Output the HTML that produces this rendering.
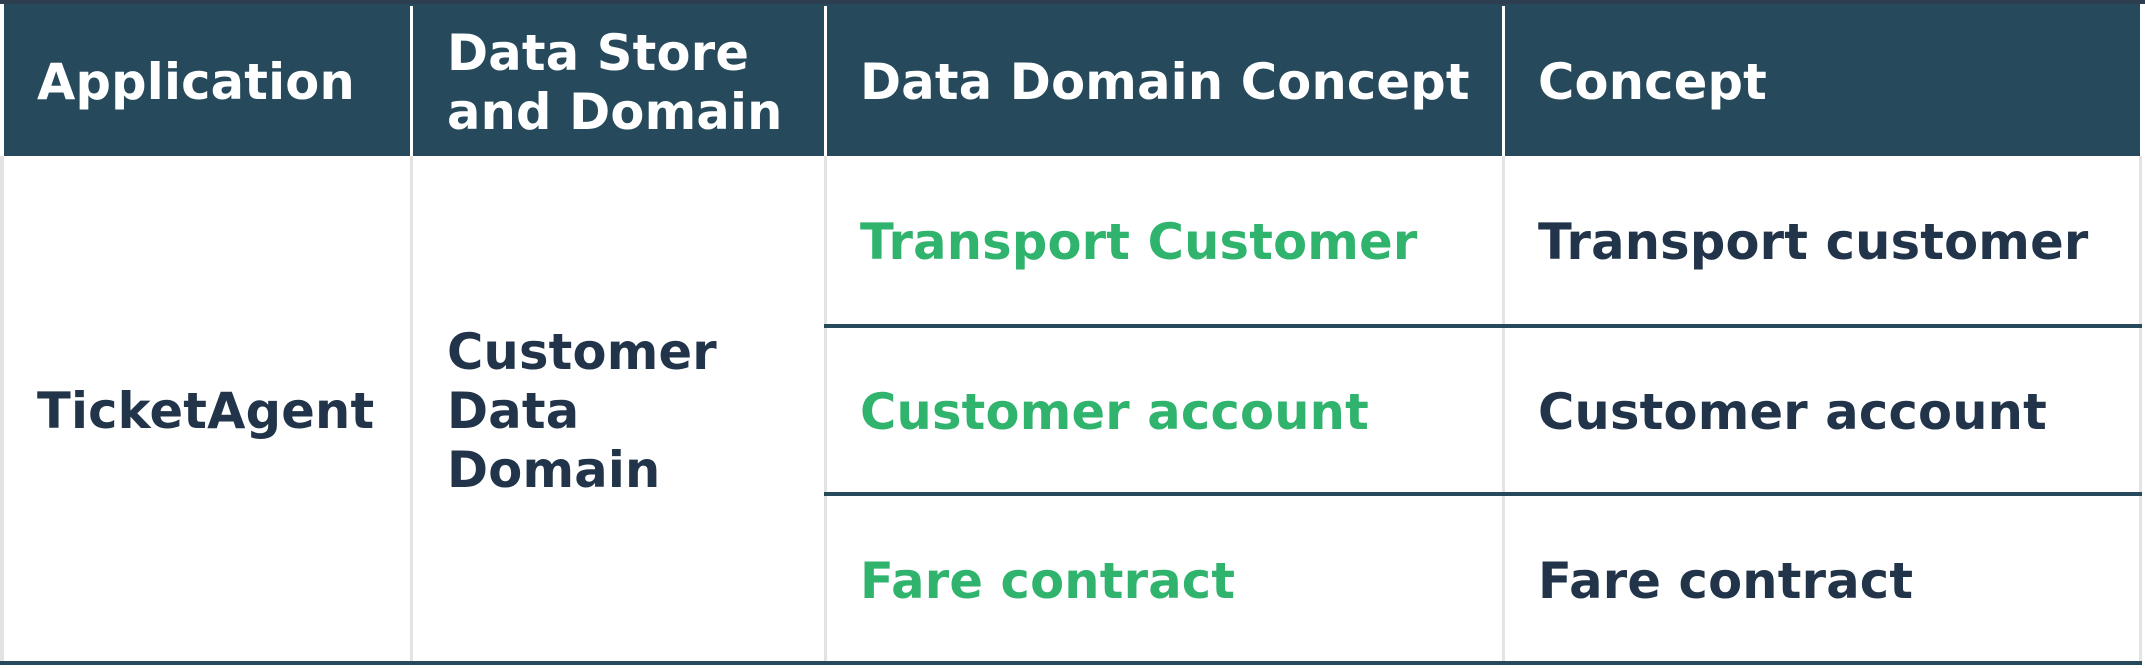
<!DOCTYPE html>
<html><head><meta charset="utf-8"><style>
html,body{margin:0;padding:0;background:#fff;}
body{width:2145px;height:668px;position:relative;overflow:hidden;font-family:"DejaVu Sans","Liberation Sans",sans-serif;font-weight:bold;font-size:49.5px;letter-spacing:0.2px;}
.a{position:absolute;}
.hd{background:#264a5c;top:4px;height:152px;}
.t{position:absolute;display:flex;align-items:center;line-height:59px;padding-top:5px;box-sizing:border-box;}
.w{color:#fff;}
.g{color:#2fb36d;}
.d{color:#22344a;}
</style></head><body>
<div class="a" style="left:0;top:0;width:2145px;height:4px;background:#2c3e50"></div>
<div class="a hd" style="left:4px;width:2136px"></div>
<div class="a" style="left:410px;top:6px;width:3px;height:150px;background:#fff"></div>
<div class="a" style="left:824px;top:6px;width:3px;height:150px;background:#fff"></div>
<div class="a" style="left:1502px;top:6px;width:3px;height:150px;background:#fff"></div>
<div class="a" style="left:0;top:156px;width:4px;height:508px;background:#e3e3e3"></div>
<div class="a" style="left:410px;top:156px;width:3px;height:508px;background:#e3e3e3"></div>
<div class="a" style="left:824px;top:156px;width:3px;height:508px;background:#e3e3e3"></div>
<div class="a" style="left:1502px;top:156px;width:3px;height:508px;background:#e3e3e3"></div>
<div class="a" style="left:2139px;top:156px;width:3px;height:508px;background:#e3e3e3"></div>
<div class="a" style="left:824px;top:324px;width:1318px;height:4px;background:#264a5c"></div>
<div class="a" style="left:824px;top:492px;width:1318px;height:4px;background:#264a5c"></div>
<div class="a" style="left:0;top:661px;width:2142px;height:4px;background:#264a5c"></div>

<div class="t w" style="left:37px;top:4px;height:152px">Application</div>
<div class="t w" style="left:447px;top:4px;height:152px">Data Store<br>and Domain</div>
<div class="t w" style="left:860px;top:4px;height:152px">Data Domain Concept</div>
<div class="t w" style="left:1538px;top:4px;height:152px">Concept</div>

<div class="t d" style="left:37px;top:156px;height:505px">TicketAgent</div>
<div class="t d" style="left:447px;top:156px;height:505px">Customer<br>Data<br>Domain</div>

<div class="t g" style="left:860px;top:156px;height:168px">Transport Customer</div>
<div class="t g" style="left:860px;top:328px;height:164px">Customer account</div>
<div class="t g" style="left:860px;top:496px;height:165px">Fare contract</div>
<div class="t d" style="left:1538px;top:156px;height:168px">Transport customer</div>
<div class="t d" style="left:1538px;top:328px;height:164px">Customer account</div>
<div class="t d" style="left:1538px;top:496px;height:165px">Fare contract</div>
</body></html>
